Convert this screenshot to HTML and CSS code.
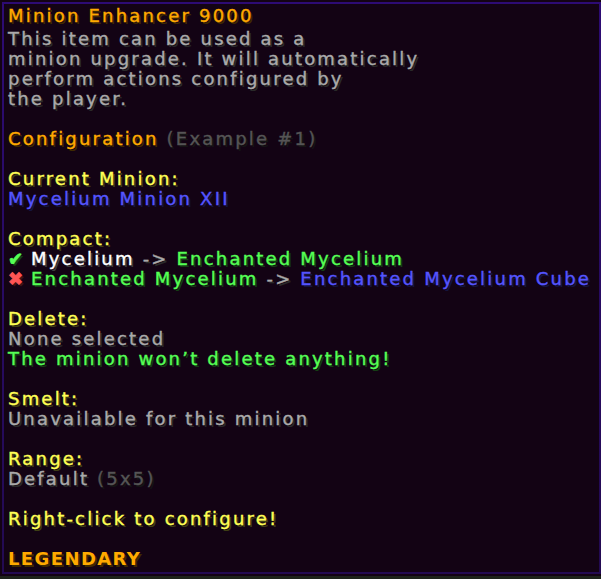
FILE: index.html
```html
<!DOCTYPE html>
<html>
<head>
<meta charset="utf-8">
<link rel="stylesheet" href="styles.css">
</head>
<body>
<div class="tooltip">
  <div class="frame">
    <div class="line title gold">Minion Enhancer 9000</div>
    <div class="line gray">This item can be used as a</div>
    <div class="line gray">minion upgrade. It will automatically</div>
    <div class="line gray">perform actions configured by</div>
    <div class="line gray">the player.</div>
    <div class="line"></div>
    <div class="line"><span class="gold">Configuration</span> <span class="dgray">(Example #1)</span></div>
    <div class="line"></div>
    <div class="line yellow">Current Minion:</div>
    <div class="line blue">Mycelium Minion XII</div>
    <div class="line"></div>
    <div class="line yellow">Compact:</div>
    <div class="line"><span class="green icon">✔</span> <span class="white">Mycelium</span> <span class="gray">-&gt;</span> <span class="green">Enchanted Mycelium</span></div>
    <div class="line"><span class="red icon">✖</span> <span class="green">Enchanted Mycelium</span> <span class="gray">-&gt;</span> <span class="blue">Enchanted Mycelium Cube</span></div>
    <div class="line"></div>
    <div class="line yellow">Delete:</div>
    <div class="line gray">None selected</div>
    <div class="line green">The minion won’t delete anything!</div>
    <div class="line"></div>
    <div class="line yellow">Smelt:</div>
    <div class="line gray">Unavailable for this minion</div>
    <div class="line"></div>
    <div class="line yellow">Range:</div>
    <div class="line"><span class="gray">Default</span> <span class="dgray">(5x5)</span></div>
    <div class="line"></div>
    <div class="line yellow">Right-click to configure!</div>
    <div class="line"></div>
    <div class="line gold bold">LEGENDARY</div>
  </div>
</div>
</body>
</html>
```

FILE: styles.css
```css
html, body {
  margin: 0;
  padding: 0;
  overflow: hidden;
  background: #1d231b;
  width: 601px;
  height: 579px;
}

.tooltip {
  box-sizing: border-box;
  width: 603px;
  height: 576px;
  padding: 2px;
  background: #130314;
}

.frame {
  box-sizing: border-box;
  height: 100%;
  border: 2px solid transparent;
  border-image: linear-gradient(#2d0b74, #230a52) 1;
  padding: 2px 4px 3px 4px;
  font-family: "DejaVu Sans", sans-serif;
  font-size: 18px;
  letter-spacing: 2.2px;
  white-space: nowrap;
  -webkit-text-stroke: 0.4px currentColor;
}

.line {
  height: 20px;
  line-height: 20px;
}

.title {
  margin-bottom: 3px;
}

.bold {
  font-weight: bold;
  letter-spacing: 1.4px;
  -webkit-text-stroke: 0;
}

.icon {
  display: inline-block;
  height: 20px;
  line-height: 20px;
  vertical-align: top;
  font-size: 18px;
  letter-spacing: 0;
  -webkit-text-stroke: 0.8px currentColor;
}

.gold { color: #ffaa00; text-shadow: 2px 2px 0 #3f2a00; }
.gray { color: #aaaaaa; text-shadow: 2px 2px 0 #2a2a2a; }
.dgray { color: #555555; text-shadow: 2px 2px 0 #151515; }
.yellow { color: #ffff55; text-shadow: 2px 2px 0 #3f3f15; }
.blue { color: #5555ff; text-shadow: 2px 2px 0 #15153f; }
.green { color: #55ff55; text-shadow: 2px 2px 0 #153f15; }
.white { color: #ffffff; text-shadow: 2px 2px 0 #3f3f3f; }
.red { color: #ff5555; text-shadow: 2px 2px 0 #3f1515; }
```
